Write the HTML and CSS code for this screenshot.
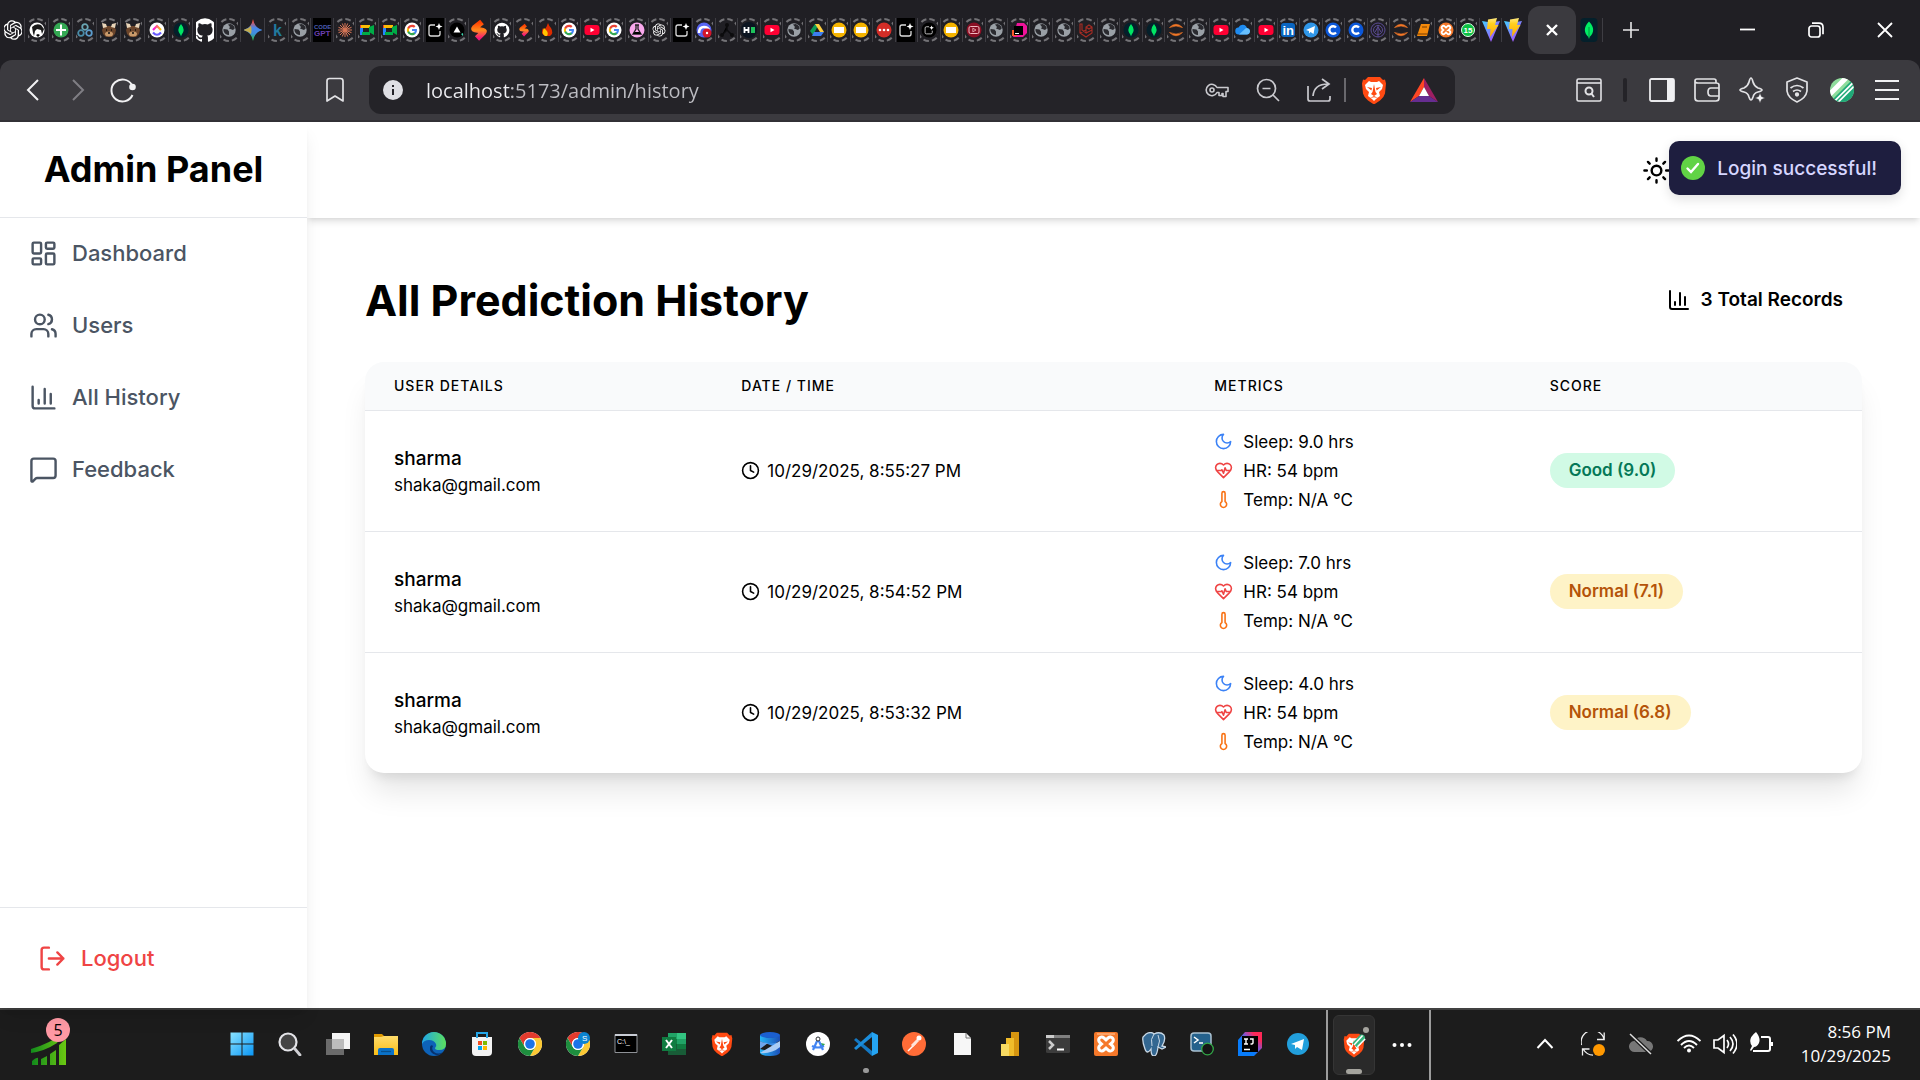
FILE: index.html
```html
<!DOCTYPE html>
<html lang="en">
<head>
<meta charset="utf-8">
<title>Admin Panel - All Prediction History</title>
<link rel="stylesheet" href="styles.css">
</head>
<body>
<svg class="sprite" aria-hidden="true">
  <defs>
    <linearGradient id="gr-gem" x1="0" y1="0" x2="0" y2="1"><stop offset=".1" stop-color="#ee4d40"/><stop offset=".4" stop-color="#4a86e8"/><stop offset=".65" stop-color="#3f8ee0"/><stop offset=".9" stop-color="#2fae5c"/></linearGradient>
    <linearGradient id="gr-fire" x1="0" y1="0" x2="0" y2="1"><stop offset="0" stop-color="#ff3d00"/><stop offset=".5" stop-color="#ff8a1e"/><stop offset="1" stop-color="#f5127c"/></linearGradient>
    <linearGradient id="gr-vite" x1="0" y1="0" x2="1" y2="1"><stop offset="0" stop-color="#41d1ff"/><stop offset="1" stop-color="#bd34fe"/></linearGradient>
    <linearGradient id="gr-bolt" x1="0" y1="0" x2="0" y2="1"><stop offset="0" stop-color="#ffea83"/><stop offset=".3" stop-color="#ffd020"/><stop offset="1" stop-color="#ffa800"/></linearGradient>
    <linearGradient id="gr-win" x1="0" y1="0" x2="1" y2="1"><stop offset="0" stop-color="#8ae3ff"/><stop offset="1" stop-color="#0a96f5"/></linearGradient>
    <linearGradient id="gr-edge" x1="0" y1="0" x2="1" y2="0"><stop offset="0" stop-color="#1fa6e8"/><stop offset="1" stop-color="#5ce05c"/></linearGradient>
    <linearGradient id="gr-folder" x1="0" y1="0" x2="0" y2="1"><stop offset="0" stop-color="#ffdc6b"/><stop offset="1" stop-color="#f9bd17"/></linearGradient>
    <linearGradient id="gr-click" x1="0" y1="0" x2="1" y2="0"><stop offset="0" stop-color="#ff02f0"/><stop offset="1" stop-color="#ffc800"/></linearGradient>
    <linearGradient id="gr-azure" x1="0" y1="0" x2="1" y2="0"><stop offset="0" stop-color="#26b5f5"/><stop offset="1" stop-color="#1b4fb8"/></linearGradient>
    <linearGradient id="gr-ij" x1="0" y1="1" x2="1" y2="0"><stop offset=".4" stop-color="#087cfa"/><stop offset=".6" stop-color="#8a50c8"/><stop offset=".8" stop-color="#fe2857"/></linearGradient>
    <linearGradient id="gr-chart" x1="0" y1="0" x2="1" y2="0"><stop offset="0" stop-color="#128a1c"/><stop offset="1" stop-color="#6bc812"/></linearGradient>

    <circle id="ring" r="11" fill="none" stroke="#737276" stroke-width="2" stroke-dasharray="5.6 3.04"/>
    <path id="p-openai" transform="translate(-12 -12)" fill="#fff" d="M22.28 9.82a5.98 5.98 0 0 0-.52-4.91 6.05 6.05 0 0 0-6.51-2.9A6.07 6.07 0 0 0 4.98 4.18a5.98 5.98 0 0 0-4 2.9 6.05 6.05 0 0 0 .74 7.1 5.98 5.98 0 0 0 .51 4.91 6.05 6.05 0 0 0 6.52 2.9A5.98 5.98 0 0 0 13.26 24a6.06 6.06 0 0 0 5.77-4.21 5.99 5.99 0 0 0 4-2.9 6.06 6.06 0 0 0-.75-7.07zm-9.02 12.61a4.48 4.48 0 0 1-2.88-1.04l.14-.08 4.78-2.76a.8.8 0 0 0 .39-.68v-6.74l2.02 1.17a.07.07 0 0 1 .04.05v5.58a4.5 4.5 0 0 1-4.49 4.5zM3.6 18.3a4.47 4.47 0 0 1-.53-3.01l.14.09 4.78 2.75a.77.77 0 0 0 .78 0l5.84-3.36v2.33a.08.08 0 0 1-.03.06L9.74 19.95A4.5 4.5 0 0 1 3.6 18.3zM2.34 7.9a4.49 4.49 0 0 1 2.37-1.98V11.6a.77.77 0 0 0 .38.68l5.82 3.35-2.02 1.17a.08.08 0 0 1-.07 0l-4.83-2.79A4.5 4.5 0 0 1 2.34 7.87zm16.6 3.85L13.1 8.36l2.02-1.16a.08.08 0 0 1 .07 0l4.83 2.79a4.49 4.49 0 0 1-.68 8.1v-5.67a.79.79 0 0 0-.4-.67zm2-3.02-.14-.09-4.77-2.78a.78.78 0 0 0-.79 0L9.41 9.23V6.9a.07.07 0 0 1 .03-.06l4.83-2.79a4.5 4.5 0 0 1 6.68 4.66zM8.31 12.86l-2.02-1.16a.08.08 0 0 1-.04-.06V6.07a4.5 4.5 0 0 1 7.37-3.45l-.14.08L8.7 5.46a.8.8 0 0 0-.39.68zm1.09-2.36 2.6-1.5 2.61 1.5v3L12.01 15 9.4 13.5z"/>
    <path id="p-github" transform="translate(-12 -12)" fill="#fff" d="M12 .3a12 12 0 0 0-3.8 23.38c.6.12.83-.26.83-.57L9 21.07c-3.34.72-4.04-1.61-4.04-1.61-.55-1.39-1.34-1.76-1.34-1.76-1.08-.74.09-.73.09-.73 1.2.09 1.83 1.24 1.83 1.24 1.08 1.83 2.81 1.3 3.5 1 .1-.78.42-1.31.76-1.61-2.67-.3-5.47-1.33-5.47-5.93 0-1.31.47-2.38 1.24-3.22-.14-.3-.54-1.52.1-3.18 0 0 1-.32 3.3 1.23a11.5 11.5 0 0 1 6 0c2.28-1.55 3.29-1.23 3.29-1.23.64 1.66.24 2.88.12 3.18a4.65 4.65 0 0 1 1.23 3.22c0 4.61-2.8 5.63-5.48 5.92.42.36.81 1.1.81 2.22l-.01 3.29c0 .31.2.69.82.57A12 12 0 0 0 12 .3"/>
    <g id="p-brave">
      <path fill="#ff4a12" d="M-6-13h12l3 3 2-.5 1 4-1 10q-1 4-5 7l-6 4-6-4q-4-3-5-7l-1-10 1-4 2 .5z"/>
      <path fill="#fff" d="M-5-9l2 1h6l2-1 4 4-1 4-3 3 1 4-4 3-2 2-2-2-4-3 1-4-3-3-1-4z"/>
      <path fill="#ff4a12" d="M-7-3l5 1-.6 2.500zM7-3l-5 1 .6 2.500zM0-6l1.500 8L3 4 0 6l-3-2 1.500-2zM-4 8l4-2 4 2-4-.8z"/>
    </g>

    <g id="t-openai"><use href="#p-openai" transform="scale(.82)"/></g>
    <g id="t-openai-s"><use href="#ring"/><use href="#p-openai" transform="scale(.55)"/></g>
    <g id="t-husky"><use href="#ring"/><circle r="7.500" fill="#fff"/><path d="M-5-3q4-4 9-2l3 4-2 5-1-4-4-1-2 2-1 5-1-3z" fill="#1a1a1a"/><path d="M-1 5l2-1 2 1-2 2z"/></g>
    <g id="t-plus"><use href="#ring"/><circle r="7.500" fill="#34a853"/><path d="M0-5.500V5.500M-5 0H5" stroke="#fff" stroke-width="2"/></g>
    <g id="t-rings"><use href="#ring"/><g fill="none" stroke-width="1.800"><circle cy="-3" r="2.800" stroke="#6aa6b4"/><circle cx="-4" cy="3" r="2.800" stroke="#4a8ca8"/><circle cx="4" cy="3" r="2.800" stroke="#5c9ccc"/></g></g>
    <g id="t-deer"><use href="#ring"/><path d="M-5-4h10l2 4-1 4-3 3h-6l-3-3-1-4z" fill="#6b452b"/><path d="M-7-7l4 1 1 3-4 1zM7-7l-4 1-1 3 4 1z" fill="#e8d4b8"/><ellipse cy="4" rx="4" ry="2.500" fill="#c99a6b"/><path d="M-3 0h1M2 0h1M-1 3h2" stroke="#111" stroke-width="1.500"/></g>
    <g id="t-clickup"><use href="#ring"/><circle r="7.500" fill="#fff"/><path d="M-4 0L0-4l4 4" fill="none" stroke="url(#gr-click)" stroke-width="2.200"/><path d="M-4 2.500Q0 7 4 2.500" fill="none" stroke="#6a5cff" stroke-width="2.200"/></g>
    <g id="t-mongo"><use href="#ring"/><circle r="7.500" fill="#04202b"/><path d="M0-6Q5 0 .5 5L0 6.500-.5 5Q-5 0 0-6z" fill="#00e664"/></g>
    <g id="t-mongo-l"><rect x="-8.500" y="-12" width="17" height="24" rx="4" fill="#04202b"/><path d="M0-8.500Q8 0 .6 7L0 9-.6 7Q-8 0 0-8.500z" fill="#00ed64"/><path d="M0-3V8" stroke="#04803a" stroke-width=".8"/></g>
    <g id="t-github"><use href="#p-github"/></g>
    <g id="t-github-s"><use href="#ring"/><use href="#p-github" transform="scale(.62)"/></g>
    <g id="t-globe"><use href="#ring"/><circle r="6.700" fill="#9aa0a6"/><path d="M-5.500-1l4 .5 1.500 2 0 3.500q-4 0-5.500-4zM-1-5.500l2 2.500-1 1.500 4 1.500 1.700-1.500q0-3-4-4.500z" fill="#2a2a2f"/></g>
    <g id="t-gemini"><path d="M0-11Q1.500-2 9.500 0 1.500 2 0 11-1.500 2-9.500 0-1.500-2 0-11z" fill="url(#gr-gem)"/><path d="M-9.500 0Q-4-1.400-2-4-1 0-2 4-4 1.400-9.500 0z" fill="#e5b62a" opacity=".8"/></g>
    <g id="t-kaggle"><use href="#ring"/><text x="-4" y="6" font-size="16" font-weight="700" fill="#20799e">k</text></g>
    <g id="t-gpt"><path d="M-9-12H9V12H-9z" fill="#000"/><text x="-8" y="-1" font-size="6" font-weight="700" fill="#4a5cb0">CODE</text><text x="-8" y="6" font-size="8" font-weight="700" fill="#6a3fb0">GPT</text></g>
    <g id="t-claude"><use href="#ring"/><path d="M0-7V7M-7 0H7M-5-5L5 5M5-5L-5 5M-2.700-6.500L2.700 6.500M2.700-6.500L-2.700 6.500M-6.500-2.700L6.500 2.700M6.500-2.700L-6.500 2.700" stroke="#d97757" stroke-width="1"/></g>
    <g id="t-meet"><use href="#ring"/><path d="M-7-5h4v3h-4z" fill="#ea4335"/><path d="M-6-5h9v3h-9z" fill="#fbbc04"/><path d="M-7-2h3v7h-3z" fill="#2684fc"/><path d="M-5 2h8V5h-8zM2-3l5-2V5L2 2z" fill="#00ac47"/></g>
    <g id="t-google"><use href="#ring"/><circle r="7.500" fill="#fff"/><g transform="scale(.47) translate(-12 -12)"><path d="M22.560 12.250c0-.78-.07-1.530-.2-2.250H12v4.260h5.920c-.26 1.370-1.040 2.530-2.210 3.310v2.770h3.570c2.080-1.920 3.280-4.740 3.280-8.090z" fill="#4285f4"/><path d="M12 23c2.970 0 5.460-.98 7.280-2.660l-3.570-2.770c-.98.66-2.230 1.060-3.710 1.060-2.860 0-5.290-1.930-6.160-4.530H2.180v2.840C3.990 20.530 7.700 23 12 23z" fill="#34a853"/><path d="M5.840 14.090a6.500 6.500 0 0 1 0-4.180V7.070H2.180a11 11 0 0 0 0 9.860z" fill="#fbbc05"/><path d="M12 5.380c1.620 0 3.060.56 4.210 1.640l3.150-3.150C17.450 2.090 14.970 1 12 1 7.700 1 3.990 3.470 2.180 7.070l3.660 2.840c.87-2.600 3.300-4.530 6.160-4.530z" fill="#ea4335"/></g></g>
    <g id="p-spark"><path d="M0-5H-4Q-6-5-6-3V4Q-6 6-4 6H3Q5 6 5 4V1" fill="none" stroke="#ddd" stroke-width="1.300"/><path d="M4-7l1 2.500L7.500-3.500 5-2.500 4 0 3-2.500.5-3.500 3-4.500z" fill="#fff"/></g>
    <g id="t-spark"><path d="M-9-12H9V12H-9z" fill="#000"/><use href="#p-spark"/></g>
    <g id="t-spark-s"><use href="#ring"/><circle r="7.500" fill="#000"/><use href="#p-spark" transform="scale(.65)"/></g>
    <g id="t-tri"><use href="#ring"/><circle r="7.500" fill="#000"/><path d="M0-3.500L3.500 2.500h-7z" fill="#fff"/><path d="M4 4l2-1v3z" fill="#3ddbb0"/></g>
    <path id="p-flame" d="M3-8L-4.500-2q-1 1 .5 1.200L4 .8q1.500.4.500 1.400L-2 8.500" fill="none" stroke="url(#gr-fire)" stroke-width="6"/>
    <g id="t-flame"><use href="#p-flame"/></g>
    <g id="t-flame-s"><use href="#ring"/><use href="#p-flame" transform="scale(.6)"/></g>
    <g id="t-fire"><use href="#ring"/><path d="M1-7q1 3 3 5 3 5-1 8h-5q-5-3-2-8l1 2q3-3 4-7z" fill="#dd2c00"/><path d="M-3-2q-3 5 1 8h2q2-3-1-6z" fill="#ffc400"/></g>
    <g id="t-yt"><use href="#ring"/><rect x="-7.500" y="-5" width="15" height="10" rx="3" fill="#ff0033"/><path d="M-1.500-2.200L2.500 0l-4 2.200z" fill="#fff"/></g>
    <g id="t-flask"><use href="#ring"/><circle r="7.500" fill="#f9a8ec"/><path d="M-2-5H2M-1-5V-1L-4 4H4L1-1V-5" fill="none" stroke="#222" stroke-width="1.300"/><path d="M-2.500 2h5l1.500 2h-8z"/></g>
    <g id="t-discord"><use href="#ring"/><circle r="7.500" fill="#5865f2"/><path d="M-5 3q0-6 5-6 4 0 5 3" fill="none" stroke="#fff" stroke-width="2.500"/><circle cx="3" cy="3" r="4.500" fill="#d3162b"/><circle cx="3" cy="3" r="1.200" fill="#fff"/></g>
    <g id="t-nodes"><use href="#ring"/><path d="M0-5V0L-5 5M0 0l5 5" stroke="#0c0c0e" stroke-width="1.500"/><g fill="#0c0c0e"><circle cy="-5" r="2"/><circle cx="-5" cy="5" r="2"/><circle cx="5" cy="5" r="2"/></g></g>
    <g id="t-hack"><use href="#ring"/><circle r="8" fill="#0b1420"/><path d="M-4.500-3V3M-.500-3V3M-4.500 0H-.5" stroke="#fff" stroke-width="1.800"/><path d="M2-3h4v6H2z" fill="#1ec35a"/></g>
    <g id="t-drive"><use href="#ring"/><path d="M-2-6h4L-4 5-7 1z" fill="#0f9d58"/><path d="M-2-6h4L7 2H3z" fill="#ffcf3f"/><path d="M-3 2H7L4 6h-9z" fill="#3d7df0"/></g>
    <g id="t-slides"><use href="#ring"/><circle r="7.500" fill="#f5b400"/><path d="M-5-3H5V3H-5z" fill="#fff"/></g>
    <g id="t-dots"><use href="#ring"/><circle r="7.500" fill="#d32d27"/><g fill="#fff"><circle cx="-4" r="1.300"/><circle r="1.300"/><circle cx="4" r="1.300"/></g></g>
    <g id="t-play"><use href="#ring"/><circle r="7.500" fill="#8a0f24"/><rect x="-5" y="-3.500" width="10" height="7" rx="1.500" fill="none" stroke="#f2b9c0"/><path d="M-1.200-1.800L2 0l-3.200 1.800z" fill="none" stroke="#f2b9c0" stroke-width=".8"/></g>
    <g id="t-jb"><use href="#ring"/><path d="M-2-7h7l3 3v7l-4 4h-10z" fill="#f0139b"/><path d="M-7 0h5v6h-5z" fill="#fc5a2a"/><path d="M-5-4h9v9h-9z"/><path d="M-4 3.500h4" stroke="#fff"/></g>
    <g id="t-laravel"><use href="#ring"/><path d="M-6-6V3L0 7l6-4V-3L3-5 0-3V3l-4-3v-6zM0-3l3 2 3-2M0 3l6-3M-6 3l6-3" fill="none" stroke="#a82c24" stroke-width="1.100"/></g>
    <g id="t-jupyter"><use href="#ring"/><path d="M-6.500-2.500Q0-9 6.500-2.500 0-5.500-6.500-2.500zM-6.500 2.500Q0 9 6.500 2.500 0 5.500-6.500 2.500z" fill="#f37726" stroke="#f37726" stroke-width=".6"/></g>
    <g id="t-cloud"><use href="#ring"/><path d="M-4 4.500a3.500 3.500 0 0 1-.5-7A4.500 4.500 0 0 1 4-2a3.300 3.300 0 0 1 0 6.500z" fill="#1e8bf0"/><path d="M-4 4.500L3-2q4 0 4 3.500-.5 3-3 3z" fill="#67c0ff"/></g>
    <g id="t-in"><use href="#ring"/><rect x="-7" y="-7" width="14" height="14" rx="3" fill="#0a66c2"/><text x="-5.500" y="4.500" font-size="13" font-weight="700" fill="#fff">in</text></g>
    <g id="t-tg"><use href="#ring"/><circle r="7.500" fill="#2f96e8"/><path d="M-5 0L4-4 2.500 4-.5 2-2 3.500V1z" fill="#fff"/></g>
    <g id="t-c"><use href="#ring"/><circle r="7.500" fill="#0b57d8"/><path d="M3-2.500A3.800 3.800 0 1 0 3 2.500" fill="none" stroke="#fff" stroke-width="2.400"/></g>
    <g id="t-purple"><use href="#ring"/><g fill="none" stroke="#5a4b94"><circle r="7"/><circle r="4.500"/><path d="M0-5V7M-3 2l3-5 3 5"/></g></g>
    <g id="t-book"><use href="#ring"/><path d="M-2-6H7L4 6H-6z" fill="#f58a0b"/><path d="M-1-3H4M-5 4H4.500" stroke="#7a3d00" stroke-width="1.200"/></g>
    <g id="p-x" stroke-linecap="round"><path d="M-2.500-2.300L2.500 2.300M2.500-2.300L-2.500 2.300" stroke="#fff" stroke-width="5.400"/><path d="M-2.500-2.300L2.500 2.300M2.500-2.300L-2.500 2.300" stroke="#f5782a" stroke-width="1.800"/></g>
    <g id="t-xampp"><use href="#ring"/><circle r="7.500" fill="#f5782a"/><use href="#p-x"/></g>
    <g id="t-wa"><use href="#ring"/><circle r="6.500" fill="#0cc143" stroke="#dfffe8"/><text x="-4.500" y="3" font-size="8" font-weight="700" fill="#fff">15</text></g>
    <g id="t-vite"><path d="M-9-9L0-7.500 9-9 0 12z" fill="url(#gr-vite)"/><path d="M-3-10.500L6-12 4-5H7.500L-1 7-.5-1H-4z" fill="url(#gr-bolt)"/></g>

    <g id="l-chart" fill="none" stroke="currentColor" stroke-width="2" stroke-linecap="round" stroke-linejoin="round"><path d="M3 3v16a2 2 0 0 0 2 2h16M18 17V9M13 17V5M8 17v-3"/></g>
    <g id="l-clock" fill="none" stroke="currentColor" stroke-width="2" stroke-linecap="round" stroke-linejoin="round"><circle cx="12" cy="12" r="10"/><path d="M12 6v6l4 2"/></g>
    <path id="l-moon" fill="none" stroke="currentColor" stroke-width="2" stroke-linecap="round" stroke-linejoin="round" d="M12 3a6 6 0 0 0 9 9 9 9 0 1 1-9-9Z"/>
    <g id="l-heart" fill="none" stroke="currentColor" stroke-width="2" stroke-linecap="round" stroke-linejoin="round"><path d="M19 14c1.490-1.460 3-3.210 3-5.500A5.500 5.500 0 0 0 16.500 3c-1.760 0-3 .5-4.500 2-1.500-1.500-2.740-2-4.500-2A5.500 5.500 0 0 0 2 8.500c0 2.300 1.500 4.050 3 5.500l7 7Z"/><path d="M3.220 12H9.500l.5-1 2 4.500 2-7 1.500 3.500h5.270"/></g>
    <path id="l-temp" fill="none" stroke="currentColor" stroke-width="2" stroke-linecap="round" stroke-linejoin="round" d="M14 4v10.540a4 4 0 1 1-4 0V4a2 2 0 0 1 4 0Z"/>
    <g id="k-chrome"><circle r="12" fill="#fff"/><path d="M-10.400-6A12 12 0 0 1 10.400-6H0A6 6 0 0 0-5.200 3z" fill="#e33b2e"/><path d="M10.400-6A12 12 0 0 1 0 12L5.200 3A6 6 0 0 0 0-6z" fill="#fcc934"/><path d="M0 12A12 12 0 0 1-10.400-6L-5.200 3A6 6 0 0 0 5.200 3z" fill="#1e8e3e"/><circle r="6" fill="#fff"/><circle r="4.800" fill="#1a73e8"/></g>
  </defs>
</svg>

<header class="browser">
  <div class="tabstrip">
    <div class="pinned">
      <button class="tab" aria-label="ChatGPT"><svg viewBox="-9 -12 18 24"><use href="#t-openai"/></svg></button>
      <button class="tab" aria-label="Tab"><svg viewBox="-9 -12 18 24"><use href="#t-husky"/></svg></button>
      <button class="tab" aria-label="Tab"><svg viewBox="-9 -12 18 24"><use href="#t-plus"/></svg></button>
      <button class="tab" aria-label="Tab"><svg viewBox="-9 -12 18 24"><use href="#t-rings"/></svg></button>
      <button class="tab" aria-label="Tab"><svg viewBox="-9 -12 18 24"><use href="#t-deer"/></svg></button>
      <button class="tab" aria-label="Tab"><svg viewBox="-9 -12 18 24"><use href="#t-deer"/></svg></button>
      <button class="tab" aria-label="ClickUp"><svg viewBox="-9 -12 18 24"><use href="#t-clickup"/></svg></button>
      <button class="tab" aria-label="MongoDB"><svg viewBox="-9 -12 18 24"><use href="#t-mongo"/></svg></button>
      <button class="tab" aria-label="GitHub"><svg viewBox="-9 -12 18 24"><use href="#t-github"/></svg></button>
      <button class="tab" aria-label="Tab"><svg viewBox="-9 -12 18 24"><use href="#t-globe"/></svg></button>
      <button class="tab" aria-label="Gemini"><svg viewBox="-9 -12 18 24"><use href="#t-gemini"/></svg></button>
      <button class="tab" aria-label="Kaggle"><svg viewBox="-9 -12 18 24"><use href="#t-kaggle"/></svg></button>
    </div>
    <div class="tabs">
      <button class="tab" aria-label="Tab"><svg viewBox="-9 -12 18 24"><use href="#t-globe"/></svg></button>
      <button class="tab" aria-label="CodeGPT"><svg viewBox="-9 -12 18 24"><use href="#t-gpt"/></svg></button>
      <button class="tab" aria-label="Claude"><svg viewBox="-9 -12 18 24"><use href="#t-claude"/></svg></button>
      <button class="tab" aria-label="Meet"><svg viewBox="-9 -12 18 24"><use href="#t-meet"/></svg></button>
      <button class="tab" aria-label="Meet"><svg viewBox="-9 -12 18 24"><use href="#t-meet"/></svg></button>
      <button class="tab" aria-label="Google"><svg viewBox="-9 -12 18 24"><use href="#t-google"/></svg></button>
      <button class="tab" aria-label="Tab"><svg viewBox="-9 -12 18 24"><use href="#t-spark"/></svg></button>
      <button class="tab" aria-label="Tab"><svg viewBox="-9 -12 18 24"><use href="#t-tri"/></svg></button>
      <button class="tab" aria-label="Tab"><svg viewBox="-9 -12 18 24"><use href="#t-flame"/></svg></button>
      <button class="tab" aria-label="GitHub"><svg viewBox="-9 -12 18 24"><use href="#t-github-s"/></svg></button>
      <button class="tab" aria-label="Tab"><svg viewBox="-9 -12 18 24"><use href="#t-flame-s"/></svg></button>
      <button class="tab" aria-label="Firebase"><svg viewBox="-9 -12 18 24"><use href="#t-fire"/></svg></button>
      <button class="tab" aria-label="Google"><svg viewBox="-9 -12 18 24"><use href="#t-google"/></svg></button>
      <button class="tab" aria-label="YouTube"><svg viewBox="-9 -12 18 24"><use href="#t-yt"/></svg></button>
      <button class="tab" aria-label="Google"><svg viewBox="-9 -12 18 24"><use href="#t-google"/></svg></button>
      <button class="tab" aria-label="Tab"><svg viewBox="-9 -12 18 24"><use href="#t-flask"/></svg></button>
      <button class="tab" aria-label="ChatGPT"><svg viewBox="-9 -12 18 24"><use href="#t-openai-s"/></svg></button>
      <button class="tab" aria-label="Tab"><svg viewBox="-9 -12 18 24"><use href="#t-spark"/></svg></button>
      <button class="tab" aria-label="Discord"><svg viewBox="-9 -12 18 24"><use href="#t-discord"/></svg></button>
      <button class="tab" aria-label="Tab"><svg viewBox="-9 -12 18 24"><use href="#t-nodes"/></svg></button>
      <button class="tab" aria-label="HackerRank"><svg viewBox="-9 -12 18 24"><use href="#t-hack"/></svg></button>
      <button class="tab" aria-label="YouTube"><svg viewBox="-9 -12 18 24"><use href="#t-yt"/></svg></button>
      <button class="tab" aria-label="Tab"><svg viewBox="-9 -12 18 24"><use href="#t-globe"/></svg></button>
      <button class="tab" aria-label="Drive"><svg viewBox="-9 -12 18 24"><use href="#t-drive"/></svg></button>
      <button class="tab" aria-label="Slides"><svg viewBox="-9 -12 18 24"><use href="#t-slides"/></svg></button>
      <button class="tab" aria-label="Slides"><svg viewBox="-9 -12 18 24"><use href="#t-slides"/></svg></button>
      <button class="tab" aria-label="Tab"><svg viewBox="-9 -12 18 24"><use href="#t-dots"/></svg></button>
      <button class="tab" aria-label="Tab"><svg viewBox="-9 -12 18 24"><use href="#t-spark"/></svg></button>
      <button class="tab" aria-label="Tab"><svg viewBox="-9 -12 18 24"><use href="#t-spark-s"/></svg></button>
      <button class="tab" aria-label="Slides"><svg viewBox="-9 -12 18 24"><use href="#t-slides"/></svg></button>
      <button class="tab" aria-label="Tab"><svg viewBox="-9 -12 18 24"><use href="#t-play"/></svg></button>
      <button class="tab" aria-label="Tab"><svg viewBox="-9 -12 18 24"><use href="#t-globe"/></svg></button>
      <button class="tab" aria-label="JetBrains"><svg viewBox="-9 -12 18 24"><use href="#t-jb"/></svg></button>
      <button class="tab" aria-label="Tab"><svg viewBox="-9 -12 18 24"><use href="#t-globe"/></svg></button>
      <button class="tab" aria-label="Tab"><svg viewBox="-9 -12 18 24"><use href="#t-globe"/></svg></button>
      <button class="tab" aria-label="Laravel"><svg viewBox="-9 -12 18 24"><use href="#t-laravel"/></svg></button>
      <button class="tab" aria-label="Tab"><svg viewBox="-9 -12 18 24"><use href="#t-globe"/></svg></button>
      <button class="tab" aria-label="MongoDB"><svg viewBox="-9 -12 18 24"><use href="#t-mongo"/></svg></button>
      <button class="tab" aria-label="MongoDB"><svg viewBox="-9 -12 18 24"><use href="#t-mongo"/></svg></button>
      <button class="tab" aria-label="Jupyter"><svg viewBox="-9 -12 18 24"><use href="#t-jupyter"/></svg></button>
      <button class="tab" aria-label="Tab"><svg viewBox="-9 -12 18 24"><use href="#t-globe"/></svg></button>
      <button class="tab" aria-label="YouTube"><svg viewBox="-9 -12 18 24"><use href="#t-yt"/></svg></button>
      <button class="tab" aria-label="OneDrive"><svg viewBox="-9 -12 18 24"><use href="#t-cloud"/></svg></button>
      <button class="tab" aria-label="YouTube"><svg viewBox="-9 -12 18 24"><use href="#t-yt"/></svg></button>
      <button class="tab" aria-label="LinkedIn"><svg viewBox="-9 -12 18 24"><use href="#t-in"/></svg></button>
      <button class="tab" aria-label="Telegram"><svg viewBox="-9 -12 18 24"><use href="#t-tg"/></svg></button>
      <button class="tab" aria-label="Coursera"><svg viewBox="-9 -12 18 24"><use href="#t-c"/></svg></button>
      <button class="tab" aria-label="Coursera"><svg viewBox="-9 -12 18 24"><use href="#t-c"/></svg></button>
      <button class="tab" aria-label="Tab"><svg viewBox="-9 -12 18 24"><use href="#t-purple"/></svg></button>
      <button class="tab" aria-label="Jupyter"><svg viewBox="-9 -12 18 24"><use href="#t-jupyter"/></svg></button>
      <button class="tab" aria-label="Notebook"><svg viewBox="-9 -12 18 24"><use href="#t-book"/></svg></button>
      <button class="tab" aria-label="XAMPP"><svg viewBox="-9 -12 18 24"><use href="#t-xampp"/></svg></button>
      <button class="tab" aria-label="WhatsApp"><svg viewBox="-9 -12 18 24"><use href="#t-wa"/></svg></button>
      <button class="tab" aria-label="Vite"><svg viewBox="-9 -12 18 24"><use href="#t-vite"/></svg></button>
      <button class="tab tab-last" aria-label="Vite"><svg viewBox="-9 -12 18 24"><use href="#t-vite"/></svg></button>
    </div>
    <button class="tab-active" aria-label="Close tab"><svg width="14" height="14" viewBox="0 0 14 14"><path d="M2 2l10 10M12 2L2 12" stroke="#fff" stroke-width="2.400"/></svg></button>
    <button class="tab tab-after" aria-label="MongoDB"><svg viewBox="-9 -12 18 24"><use href="#t-mongo-l"/></svg></button>
    <button class="new-tab" aria-label="New tab"><svg width="16" height="16" viewBox="0 0 16 16"><path d="M8 0v16M0 8h16" stroke="#e6e6e8" stroke-width="1.600"/></svg></button>
    <div class="window-controls">
      <button aria-label="Minimize"><svg width="16" height="16" viewBox="0 0 16 16"><path d="M1 7.500h15" stroke="#fff" stroke-width="1.800"/></svg></button>
      <button aria-label="Restore"><svg width="16" height="16" viewBox="0 0 16 16" fill="none" stroke="#fff" stroke-width="1.700"><rect x="1" y="4" width="11" height="11" rx="2.500"/><path d="M4 1.200h7q4 0 4 4v7"/></svg></button>
      <button aria-label="Close"><svg width="16" height="16" viewBox="0 0 16 16"><path d="M1 1l14 14M15 1L1 15" stroke="#fff" stroke-width="1.800"/></svg></button>
    </div>
  </div>

  <div class="toolbar">
    <div class="nav-buttons">
      <button aria-label="Back"><svg width="28" height="28" viewBox="0 0 28 28"><path d="M19 4L9 14l10 10" fill="none" stroke="#f1f1f3" stroke-width="2"/></svg></button>
      <button aria-label="Forward"><svg width="28" height="28" viewBox="0 0 28 28"><path d="M9 4l10 10L9 24" fill="none" stroke="#7f7e84" stroke-width="2"/></svg></button>
      <button aria-label="Reload"><svg width="28" height="28" viewBox="0 0 28 28"><path d="M23 9A11 11 0 1 0 23.500 19" fill="none" stroke="#f1f1f3" stroke-width="2"/><circle cx="23.500" cy="11" r="3.300" fill="#f1f1f3"/></svg></button>
    </div>
    <button class="bookmark" aria-label="Bookmark"><svg width="20" height="26" viewBox="0 0 20 26"><path d="M2 4q0-2.500 2.500-2.500h11Q18 1.500 18 4v20l-8-5-8 5z" fill="none" stroke="#e2e2e5" stroke-width="1.700" stroke-linejoin="round"/></svg></button>
    <div class="address">
      <svg class="site-info" width="20" height="20" viewBox="0 0 20 20"><circle cx="10" cy="10" r="10" fill="#dfdfe4"/><path d="M10 9v6M10 5v2" stroke="#242328" stroke-width="2"/></svg>
      <input class="url" type="text" value="localhost:5173/admin/history" aria-label="Address">
      <div class="address-actions">
        <button aria-label="Passwords"><svg width="24" height="24" viewBox="0 0 24 24" fill="none" stroke="#c9c9ce" stroke-width="1.600"><path d="M12 9.500h11v4h-2v5h-3v-3h-1v2h-3v-3h-2a5.700 5.700 0 1 1 0-5z" stroke-linejoin="round"/><circle cx="7" cy="12" r="2"/></svg></button>
        <button aria-label="Zoom"><svg width="24" height="24" viewBox="0 0 24 24" fill="none" stroke="#c9c9ce" stroke-width="1.700"><circle cx="10.500" cy="10.500" r="9"/><path d="M17 17l6 6M6.500 10.500h8"/></svg></button>
        <button aria-label="Share"><svg width="24" height="24" viewBox="0 0 24 24" fill="none" stroke="#c9c9ce" stroke-width="1.700"><path d="M1 8v13q0 2 2 2h18q2 0 2-2v-3M6 18Q7 6 21 6M15 1l7 5-7 5"/></svg></button>
      </div>
      <div class="address-brand">
        <button aria-label="Brave Shields"><svg width="24" height="28" viewBox="-12 -14 24 28"><use href="#p-brave"/></svg></button>
        <button aria-label="Rewards"><svg width="28" height="24" viewBox="0 0 28 24"><path d="M14 0L0 24l9-6 5-9z" fill="#ff4724"/><path d="M14 0l14 24-9-6-5-9z" fill="#9e1f63"/><path d="M0 24h28l-9-6H9z" fill="#662d91"/><path d="M14 9l5 9H9z" fill="#fff"/></svg></button>
      </div>
    </div>
    <div class="extensions">
      <button aria-label="Find"><svg width="26" height="24" viewBox="0 0 26 24" fill="none" stroke="#e2e2e5" stroke-width="1.600"><rect x="1" y="1" width="24" height="22" rx="1.500"/><path d="M1 5h24"/><circle cx="13" cy="13" r="3.500" stroke-width="2"/><path d="M15 15l3 4" stroke-width="2"/></svg></button>
      <span class="ext-sep"></span>
      <button aria-label="Sidebar"><svg width="26" height="24" viewBox="0 0 26 24"><rect x="1" y="1" width="24" height="22" rx="1.500" fill="none" stroke="#e9e9ec" stroke-width="1.800"/><path d="M18 1h7v22h-7z" fill="#f0f0f3"/></svg></button>
      <button aria-label="Wallet"><svg width="26" height="24" viewBox="0 0 26 24" fill="none" stroke="#e2e2e5" stroke-width="1.700"><path d="M22 5V3q0-2-2-2H3Q1 1 1 3v17q0 3 3 3h18q3 0 3-3V7q0-2-3-2H4Q1 5 1 3M25 10h-8q-3 0-3 4t3 4h8"/></svg></button>
      <button aria-label="Leo AI"><svg width="26" height="26" viewBox="0 0 26 26"><path d="M12 1q1 0 2 4 1 4 5 6 4 1 4 2t-4 2q-4 1-5 5-1 3-2 3t-2-3q-1-4-5-5-4-1-4-2t4-2q4-2 5-6 1-4 2-4z" fill="none" stroke="#e2e2e5" stroke-width="1.700"/><path d="M21 16l1.500 3.500L26 21l-3.500 1.500L21 26l-1.500-3.500L16 21l3.500-1.500z" fill="#f4f4f6" stroke="#3b3a3f" stroke-width=".5"/></svg></button>
      <button aria-label="VPN"><svg width="24" height="26" viewBox="0 0 24 26" fill="none" stroke="#e2e2e5" stroke-width="1.700"><path d="M12 1l10 4v9q-1 7-10 11Q3 21 2 14V5z" stroke-linejoin="round"/><path d="M5.500 11q6.500-5 13 0M8 14.500q4-3 8 0"/><circle cx="12" cy="17.500" r="1.300" fill="#e2e2e5"/></svg></button>
      <button aria-label="Profile"><svg width="24" height="24" viewBox="0 0 24 24"><clipPath id="round"><circle cx="12" cy="12" r="12"/></clipPath><g clip-path="url(#round)"><path d="M0 0h24v24H0z" fill="#8fdc9c"/><path d="M0 24L24 0v24z" fill="#1fa978"/><path d="M-2 18L17-1M4 26L26 4" stroke="#fff" stroke-width="5"/><path d="M5 25L26 4" stroke="#1fa978" stroke-width="1.500"/></g></svg></button>
      <button aria-label="Menu"><svg width="26" height="22" viewBox="0 0 26 22"><path d="M1 2h24M1 11h24M1 20h24" stroke="#f1f1f3" stroke-width="2"/></svg></button>
    </div>
  </div>
</header>

<div class="app">
  <aside class="sidebar">
    <h2 class="brand">Admin Panel</h2>
    <nav class="menu">
      <a href="#dashboard"><svg viewBox="0 0 24 24"><rect x="3" y="3" width="7" height="9" rx="1"/><rect x="14" y="3" width="7" height="5" rx="1"/><rect x="14" y="12" width="7" height="9" rx="1"/><rect x="3" y="16" width="7" height="5" rx="1"/></svg>Dashboard</a>
      <a href="#users"><svg viewBox="0 0 24 24"><path d="M16 21v-2a4 4 0 0 0-4-4H6a4 4 0 0 0-4 4v2M16 3.130a4 4 0 0 1 0 7.740M22 21v-2a4 4 0 0 0-3-3.870"/><circle cx="9" cy="7" r="4"/></svg>Users</a>
      <a href="#history"><svg viewBox="0 0 24 24"><use href="#l-chart"/></svg>All History</a>
      <a href="#feedback"><svg viewBox="0 0 24 24"><path d="M22 17a2 2 0 0 1-2 2H6.830a2 2 0 0 0-1.420.59l-2.200 2.200A.7.7 0 0 1 2 21.290V5a2 2 0 0 1 2-2h16a2 2 0 0 1 2 2z"/></svg>Feedback</a>
    </nav>
    <div class="sidebar-foot">
      <button class="logout"><svg viewBox="0 0 24 24"><path d="m16 17 5-5-5-5M21 12H9M9 21H5a2 2 0 0 1-2-2V5a2 2 0 0 1 2-2h4"/></svg>Logout</button>
    </div>
  </aside>

  <div class="content">
    <div class="topbar">
      <button class="theme" aria-label="Toggle theme"><svg viewBox="0 0 24 24"><circle cx="12" cy="12" r="4"/><path d="M12 2v2M12 20v2M4.930 4.930l1.410 1.410M17.660 17.660l1.410 1.410M2 12h2M20 12h2M6.340 17.660l-1.410 1.410M19.070 4.930l-1.410 1.410"/></svg></button>
    </div>
    <main class="page">
      <div class="page-head">
        <h1>All Prediction History</h1>
        <p class="total"><svg viewBox="0 0 24 24"><use href="#l-chart"/></svg>3 Total Records</p>
      </div>
      <div class="card">
        <table>
          <colgroup><col class="c-user"><col class="c-date"><col class="c-metrics"><col></colgroup>
          <thead><tr><th>USER DETAILS</th><th>DATE / TIME</th><th>METRICS</th><th>SCORE</th></tr></thead>
          <tbody>
            <tr>
              <td><div class="name">sharma</div><div class="mail">shaka@gmail.com</div></td>
              <td><div class="date"><svg viewBox="0 0 24 24"><use href="#l-clock"/></svg>10/29/2025, 8:55:27 PM</div></td>
              <td><ul class="metrics">
                <li><svg class="sleep" viewBox="0 0 24 24"><use href="#l-moon"/></svg>Sleep: 9.0 hrs</li>
                <li><svg class="heart" viewBox="0 0 24 24"><use href="#l-heart"/></svg>HR: 54 bpm</li>
                <li><svg class="temp" viewBox="0 0 24 24"><use href="#l-temp"/></svg>Temp: N/A °C</li>
              </ul></td>
              <td><span class="badge good">Good (9.0)</span></td>
            </tr>
            <tr>
              <td><div class="name">sharma</div><div class="mail">shaka@gmail.com</div></td>
              <td><div class="date"><svg viewBox="0 0 24 24"><use href="#l-clock"/></svg>10/29/2025, 8:54:52 PM</div></td>
              <td><ul class="metrics">
                <li><svg class="sleep" viewBox="0 0 24 24"><use href="#l-moon"/></svg>Sleep: 7.0 hrs</li>
                <li><svg class="heart" viewBox="0 0 24 24"><use href="#l-heart"/></svg>HR: 54 bpm</li>
                <li><svg class="temp" viewBox="0 0 24 24"><use href="#l-temp"/></svg>Temp: N/A °C</li>
              </ul></td>
              <td><span class="badge normal">Normal (7.1)</span></td>
            </tr>
            <tr>
              <td><div class="name">sharma</div><div class="mail">shaka@gmail.com</div></td>
              <td><div class="date"><svg viewBox="0 0 24 24"><use href="#l-clock"/></svg>10/29/2025, 8:53:32 PM</div></td>
              <td><ul class="metrics">
                <li><svg class="sleep" viewBox="0 0 24 24"><use href="#l-moon"/></svg>Sleep: 4.0 hrs</li>
                <li><svg class="heart" viewBox="0 0 24 24"><use href="#l-heart"/></svg>HR: 54 bpm</li>
                <li><svg class="temp" viewBox="0 0 24 24"><use href="#l-temp"/></svg>Temp: N/A °C</li>
              </ul></td>
              <td><span class="badge normal">Normal (6.8)</span></td>
            </tr>
          </tbody>
        </table>
      </div>
    </main>
  </div>
  <div class="toast" role="status"><svg width="24" height="24" viewBox="0 0 24 24"><circle cx="12" cy="12" r="12" fill="#61d345"/><path d="M6.500 12.500l3.500 3.500 7-8" fill="none" stroke="#fff" stroke-width="2.400" stroke-linecap="round"/></svg>Login successful!</div>
</div>

<footer class="taskbar">
  <button class="widget" aria-label="Widgets"><svg width="36" height="32" viewBox="0 0 36 32"><g fill="url(#gr-chart)"><path d="M0 16Q20 10 32 0L26 10Q14 18 0 20z"/><path d="M1 28q5-4 6-3v7H1zM10 26l6-3v9h-6zM19 21l6-4v15h-6zM28 12l7-6v26h-7z"/></g></svg><span class="count">5</span></button>
  <div class="apps">
    <button aria-label="Start"><svg viewBox="-12 -12 24 24"><path d="M-11.500-11.500h11v11h-11zM.500-11.500h11v11h-11zM-11.500.500h11v11h-11zM.500.500h11v11h-11z" fill="url(#gr-win)"/></svg></button>
    <button aria-label="Search"><svg viewBox="-12 -12 24 24"><circle cx="-2" cy="-2" r="8.500" fill="#444" stroke="#e4e4e8" stroke-width="2.200"/><path d="M5 5l5 6" stroke="#d0d0d4" stroke-width="2.800" stroke-linecap="round"/></svg></button>
    <button aria-label="Task View"><svg viewBox="-12 -12 24 24"><path d="M-12-5H6v16h-18z" fill="#6b6b6b"/><path d="M-6-11h18V5H-6z" fill="#f4f4f4"/><path d="M-6-5H6V5H-6z" fill="#bcbcbc"/></svg></button>
    <button aria-label="File Explorer"><svg viewBox="-12 -12 24 24"><path d="M-12-10h8l3 3v6h-11z" fill="#e09a00"/><path d="M-12-7h7l3-1h14v19h-24z" fill="url(#gr-folder)"/><path d="M-8 11V6q0-2 2-2H6q2 0 2 2v5z" fill="#0a72c9"/><path d="M-5 7.500H5" stroke="#074f8c" stroke-width="1.300"/></svg></button>
    <button aria-label="Edge"><svg viewBox="-12 -12 24 24"><circle r="12" fill="#0d62b8"/><path d="M-12 0A12 12 0 0 1 12 0q0 6-7 6-4 0-4-2 2-2 1-4-2-4-7-4-5 0-7 4z" fill="url(#gr-edge)"/><path d="M-4 3q-1 6 6 8 4 1 7-3-5 3-9 0-3-3-1-6-2-2-3 1z" fill="#08326e"/></svg></button>
    <button aria-label="Store"><svg viewBox="-12 -12 24 24"><path d="M-10-7h20V8q0 4-4 4H-6q-4 0-4-4z" fill="#f3f3f3"/><path d="M-5-6v-5H5v5" fill="none" stroke="#24a6e8" stroke-width="2"/><path d="M-4-3h4v4h-4z" fill="#f25022"/><path d="M1-3h4v4H1z" fill="#7fba00"/><path d="M-4 2h4v4h-4z" fill="#00a4ef"/><path d="M1 2h4v4H1z" fill="#ffb900"/></svg></button>
    <button aria-label="Chrome"><svg viewBox="-12 -12 24 24"><use href="#k-chrome"/></svg></button>
    <button aria-label="Chrome profile"><svg viewBox="-12 -12 24 24"><use href="#k-chrome"/><circle cx="6" cy="-6" r="6" fill="#0b84d0"/><text x="4" y="-3" font-size="8" fill="#fff">S</text></svg></button>
    <button aria-label="Command Prompt"><svg viewBox="-12 -12 24 24"><path d="M-11-9.500h22v18h-22z" stroke="#8e9196"/><path d="M-11-9h22" stroke="#c8ccd4" stroke-width="2"/><text x="-9" y="0" font-size="7" fill="#fff">C:\_</text></svg></button>
    <button aria-label="Excel"><svg viewBox="-12 -12 24 24"><path d="M-6-11H3V0h-9z" fill="#21a366"/><path d="M3-11h9v11H3z" fill="#33c481"/><path d="M-6-5H3V0h-9z" fill="#107c41"/><path d="M3-5h9V0H3z" fill="#21a366"/><path d="M-6 0H12V11H-6z" fill="#185c37"/><path d="M3 0h9v5H3z" fill="#107c41"/><path d="M-12-7H2V7h-14z" fill="#107c41"/><path d="M-8-4l6 8M-2-4l-6 8" stroke="#fff" stroke-width="2"/></svg></button>
    <button aria-label="Brave"><svg viewBox="-14 -14 28 28"><use href="#p-brave"/></svg></button>
    <button aria-label="Data Studio"><svg viewBox="-12 -12 24 24"><path d="M-10-9v6l20 8v-5z" fill="#3d8de6"/><path d="M-10-9q10 5 20 0v6q-10 5-20 0z" fill="url(#gr-azure)"/><ellipse cy="-9" rx="10" ry="3" fill="#1b5fd0"/><path d="M-10 9V5q8 3 20-2v6q-2 3-10 3t-10-3z" fill="url(#gr-azure)"/><path d="M-10 9L10-3v6q-8 7-20 6z" fill="#a9ccf5"/><path d="M-10-3q4 2 8 2l-8 6z" fill="#6fa6ea"/></svg></button>
    <button aria-label="Android Studio"><svg viewBox="-12 -12 24 24"><circle r="12" fill="#fff"/><path d="M3-1l4 1-3 4z" fill="#34a853"/><path d="M-5 6L0-5 5 6M-6 2q6 3 12 0" fill="none" stroke="#4285f4" stroke-width="2.200"/><circle cy="-5" r="2" fill="#fff" stroke="#333"/></svg></button>
    <button class="running" aria-label="Visual Studio Code"><svg viewBox="-12 -12 24 24"><path d="M-12-4l2-2L6 7v5z" fill="#1479c4"/><path d="M-12 4l2 2L6-7v-5z" fill="#1b8ddb"/><path d="M6-12l6 3V9l-6 3z" fill="#25a4f2"/></svg></button>
    <button aria-label="Postman"><svg viewBox="-12 -12 24 24"><circle r="12" fill="#ff6c37"/><path d="M-6 7L2-1" stroke="#fff" stroke-width="1.500"/><path d="M-2 2L4-4" stroke="#ffe3d8" stroke-width="3"/><circle cx="5" cy="-6" r="2.500" fill="#fff"/></svg></button>
    <button aria-label="Document"><svg viewBox="-12 -12 24 24"><path d="M-8-11H4l5 5v17H-8z" fill="#f7f7f7"/><path d="M4-11v5h5" fill="none" stroke="#777"/></svg></button>
    <button aria-label="Power BI"><svg viewBox="-12 -12 24 24"><path d="M1-12h8v24H1z" fill="#d69510"/><path d="M-4-6h8v18h-8z" fill="#f0bc2a"/><path d="M-9 0h8v12h-8z" fill="#f7da62"/></svg></button>
    <button aria-label="Terminal"><svg viewBox="-12 -12 24 24"><rect x="-12" y="-9" width="24" height="18" rx="1.500" fill="#3c3c3c"/><path d="M-12-9h8v3h-8z" fill="#ccc"/><path d="M-4-9H12v3H-4z" fill="#808080"/><path d="M-9-3l4 4-4 4" fill="none" stroke="#ccc" stroke-width="2.500"/><path d="M-1 5.500h7" stroke="#fff" stroke-width="2"/></svg></button>
    <button aria-label="XAMPP"><svg viewBox="-12 -12 24 24"><rect x="-12" y="-12" width="24" height="24" rx="2" fill="#f5782a"/><path d="M-9-10H9" stroke="#ffb07a" stroke-width="1.500"/><use href="#p-x" transform="scale(1.700)"/></svg></button>
    <button aria-label="PostgreSQL"><svg viewBox="-12 -12 24 24"><path d="M-8-10Q-3-13 0-10 6-13 10-9q2 5-2 11l4 1-4 2-4-2q-1 9-4 9t-3-7q-4 6-6 0-3-8-2-12z" fill="#336791" stroke="#c8d8e6" stroke-width="1.300"/><path d="M0-10q-4 5-2 12M4-9q3 6 0 12" fill="none" stroke="#c8d8e6"/></svg></button>
    <button aria-label="Remote shell"><svg viewBox="-12 -12 24 24"><rect x="-11" y="-11" width="20" height="18" rx="3" fill="#24618c" stroke="#a9c1d1" stroke-width="1.500"/><path d="M-8-7l4 3-4 3M-3-1h4" fill="none" stroke="#fff" stroke-width="1.500"/><circle cx="5.500" cy="5" r="5.800" fill="#151515" stroke="#32a848" stroke-width="1.300"/></svg></button>
    <button aria-label="IntelliJ IDEA"><svg viewBox="-12 -12 24 24"><path d="M-5-12h17V4L4 12h-16V-4z" fill="url(#gr-ij)"/><path d="M-8-8H8V8H-8z"/><path d="M-6-5h4M-4-5v5M-6 0h4M0-5h3v4q0 1-2.500 1M-6 5.500H0" fill="none" stroke="#fff" stroke-width="1.400"/></svg></button>
    <button aria-label="Telegram"><svg viewBox="-12 -12 24 24"><circle r="11" fill="#229fdc"/><path d="M-7 0L6-5 4 6-1 3-3 5V1z" fill="#fff"/></svg></button>
  </div>
  <div class="current">
    <button class="app-current" aria-label="Brave window"><svg width="24" height="28" viewBox="-14 -16 28 32"><use href="#p-brave"/><path d="M-2-2L7-12q6-1 6 5L4 3z" fill="#35b57c"/><path d="M0 0L10-11M4 2L13-7" stroke="#fff" stroke-width="1.800"/></svg></button>
    <button class="more" aria-label="More"><svg width="20" height="6" viewBox="0 0 20 6" fill="#fff"><circle cx="2.500" cy="3" r="2"/><circle cx="10" cy="3" r="2"/><circle cx="17.500" cy="3" r="2"/></svg></button>
  </div>
  <div class="tray">
    <button class="wide" aria-label="Hidden icons"><svg viewBox="-12 -12 24 24"><path d="M-7.500 4L0-4l7.500 8" fill="none" stroke="#fff" stroke-width="2"/></svg></button>
    <button class="wide" aria-label="Update"><svg viewBox="-12 -12 24 24"><path d="M-11.500 1A11.500 11.500 0 0 1 11-5M11.200-11.500v7H4M-10.500 11.500V5h7M-10 5Q-6 11.200 0 11.200" fill="none" stroke="#f0f0f0" stroke-width="1.300"/><circle cx="6" cy="6" r="6" fill="#ff9800"/></svg></button>
    <button class="wide" aria-label="OneDrive"><svg viewBox="-12 -12 24 24"><path d="M-6 8a5.500 5.500 0 0 1-1-11A7.500 7.500 0 0 1 6-3a5.500 5.500 0 0 1 1 11z" fill="#777"/><path d="M-11-10L10 10" stroke="#1c1c1c" stroke-width="4"/><path d="M-11-10L10 10" stroke="#ddd" stroke-width="1.500"/></svg></button>
    <div class="status">
      <button aria-label="Wi-Fi"><svg viewBox="-12 -12 24 24"><path d="M-11.500-3Q0-14 11.500-3M-8 1Q0-7 8 1M-5 4Q0-1 5 4" fill="none" stroke="#fff" stroke-width="1.900"/><circle cy="6.500" r="2" fill="#fff"/></svg></button>
      <button aria-label="Volume"><svg viewBox="-12 -12 24 24"><path d="M-11-4h4l6-4.500v17L-7 4h-4zM2-4q3 4 0 8M5-7q6 7 0 14M8-9.500q8 9.500 0 19" fill="none" stroke="#fff" stroke-width="1.700"/></svg></button>
      <button aria-label="Battery"><svg viewBox="-12 -12 24 24"><path d="M0-7H7q2 0 2 2V5q0 2-2 2H-8" fill="none" stroke="#fff" stroke-width="2"/><path d="M9-2h3v4H9z" fill="#fff"/><path d="M-5-12q5 6 3 11-2 4-5 4l-3 4-1-1 2-4Q-14-5-5-12z" fill="#fff"/></svg></button>
    </div>
    <time class="clock">8:56 PM<br>10/29/2025</time>
  </div>
</footer>
</body>
</html>
```
FILE: styles.css
```css
* { box-sizing: border-box; }
body {
  margin: 0;
  min-height: 100vh;
  display: flex;
  flex-direction: column;
  background: #fff;
  color: #000;
  font-family: Inter, "Liberation Sans", sans-serif;
}
h1, h2, p, ul { margin: 0; padding: 0; }
button {
  margin: 0;
  padding: 0;
  border: 0;
  background: none;
  color: inherit;
  font: inherit;
  display: flex;
  align-items: center;
  justify-content: center;
}
svg { display: block; flex: none; }
svg text { font-family: "Liberation Sans", sans-serif; }
.sprite { position: absolute; width: 0; height: 0; }

/* browser window */
.browser { background: #201f24; }
.tabstrip { display: flex; align-items: center; height: 60px; }
.pinned { display: flex; width: 289px; padding-left: 1px; }
.tabs { display: flex; flex: 1; margin-right: 3px; }
.tab {
  flex: 1;
  height: 24px;
  border-right: 1px solid #3e3d43;
}
.tab svg { width: 18px; height: 24px; }
.tab-last { border-color: transparent; }
.tab-active {
  width: 48px;
  height: 48px;
  border-radius: 12px;
  background: #3b3a3f;
}
.tab-after { flex: none; width: 27px; }
.new-tab { width: 56px; height: 48px; }
.window-controls { display: flex; margin-left: 53px; padding-right: 1px; }
.window-controls button { width: 69px; height: 48px; }

.toolbar {
  display: flex;
  align-items: center;
  height: 62px;
  padding-right: 11px;
  border-bottom: 2px solid #323136;
  border-radius: 12px 12px 0 0;
  background: #3b3a3f;
}
.nav-buttons { display: flex; padding-left: 10px; }
.nav-buttons button { width: 45px; height: 45px; }
.bookmark { width: 50px; height: 45px; margin: 0 9px 0 165px; }
.address {
  flex: 1;
  display: flex;
  align-items: center;
  height: 48px;
  padding: 0 6px 0 14px;
  border-radius: 12px;
  background: #242328;
}
.url {
  flex: 1;
  min-width: 0;
  height: 40px;
  margin-left: 23px;
  padding: 0;
  border: 0;
  color: transparent;
  background: linear-gradient(90deg, #ececf0 86px, #bdbdc3 86px);
  -webkit-background-clip: text;
  background-clip: text;
  font: 20px "Open Sans", "Noto Sans", sans-serif;
}
.address-actions { display: flex; border-right: 2px solid #69686d; }
.address-actions button { width: 51px; height: 24px; }
.address-brand { display: flex; padding-left: 3px; }
.address-brand button { width: 50px; height: 28px; }
.extensions { display: flex; align-items: center; margin-left: 111px; }
.extensions button { width: 45px; height: 45px; }
.ext-sep { width: 4px; height: 24px; margin: 0 12px; border-radius: 2px; background: #242328; }

/* admin application */
.app { position: relative; flex: 1; display: flex; }
.sidebar {
  position: relative;
  z-index: 1;
  display: flex;
  flex-direction: column;
  width: 307px;
  background: #fff;
  box-shadow: 0 12px 18px -4px rgba(0, 0, 0, .1), 0 5px 7px -4px rgba(0, 0, 0, .1);
}
.brand {
  height: 96px;
  border-bottom: 1px solid #e5e7eb;
  font-size: 36px;
  line-height: 94px;
  font-weight: 700;
  text-align: center;
}
.menu { flex: 1; }
.menu a {
  display: flex;
  align-items: center;
  gap: 14px;
  height: 72px;
  padding: 0 0 2px 29px;
  color: #4b5563;
  font-size: 22px;
  font-weight: 500;
  text-decoration: none;
}
.menu svg, .logout svg, .theme svg {
  width: 29px;
  height: 29px;
  fill: none;
  stroke: currentColor;
  stroke-width: 2;
  stroke-linecap: round;
  stroke-linejoin: round;
}
.sidebar-foot { padding: 20px 19px; border-top: 1px solid #e5e7eb; }
.logout {
  width: 100%;
  height: 60px;
  justify-content: flex-start;
  gap: 14px;
  padding-left: 19px;
  color: #ef4444;
  font-size: 22px;
  font-weight: 500;
}
.content { flex: 1; display: flex; flex-direction: column; min-width: 0; }
.topbar {
  display: flex;
  justify-content: flex-end;
  align-items: center;
  height: 96px;
  padding-right: 249px;
  background: #fff;
  box-shadow: 0 5px 7px -1px rgba(0, 0, 0, .1), 0 2px 5px -2px rgba(0, 0, 0, .1);
}
.page { padding: 48px 58px; }
.page-head {
  display: flex;
  justify-content: space-between;
  align-items: center;
  height: 67px;
  margin-bottom: 29px;
}
h1 { font-size: 43px; line-height: 48px; font-weight: 700; }
.total {
  display: flex;
  align-items: center;
  gap: 10px;
  padding-right: 19px;
  font-size: 19px;
  font-weight: 600;
}
.total svg { width: 24px; height: 24px; }
.card {
  overflow: hidden;
  border-radius: 19px;
  background: #fff;
  box-shadow: 0 24px 30px -6px rgba(0, 0, 0, .1), 0 10px 12px -7px rgba(0, 0, 0, .1);
}
table { width: 100%; border-collapse: collapse; table-layout: fixed; }
.c-user { width: 23.2%; }
.c-date { width: 31.6%; }
.c-metrics { width: 22.4%; }
th, td { padding: 0 29px; text-align: left; }
th {
  height: 48px;
  background: #f9fafb;
  font-size: 14px;
  font-weight: 500;
  letter-spacing: 1px;
}
td { height: 121px; border-top: 1px solid #e5e7eb; font-size: 17px; }
.name { font-size: 19px; line-height: 29px; font-weight: 500; }
.mail { line-height: 24px; }
.date { display: flex; align-items: center; gap: 7px; }
.date svg { width: 19px; height: 19px; }
.metrics { list-style: none; }
.metrics li { display: flex; align-items: center; gap: 10px; height: 29px; }
.metrics svg { width: 19px; height: 19px; }
.sleep { color: #3b82f6; }
.heart { color: #ef4444; }
.temp { color: #f97316; }
.badge {
  display: inline-block;
  padding: 0 19px;
  border-radius: 18px;
  font-size: 17px;
  line-height: 35px;
  font-weight: 600;
}
.good { background: #d1fae5; color: #047857; }
.normal { background: #fef3c7; color: #b45309; }

.toast {
  position: absolute;
  z-index: 2;
  top: 19px;
  right: 19px;
  display: flex;
  align-items: center;
  gap: 12px;
  height: 54px;
  padding: 0 24px 0 12px;
  border-radius: 10px;
  background: #1e1e3f;
  color: #d6d6ff;
  font-size: 19px;
  font-weight: 500;
  box-shadow: 0 4px 12px rgba(0, 0, 0, .12);
}

/* taskbar */
.taskbar {
  display: flex;
  align-items: stretch;
  height: 72px;
  border-top: 2px solid #414141;
  background: #1c1c1c;
  color: #fff;
}
.widget { position: relative; width: 97px; padding-top: 8px; }
.count {
  position: absolute;
  top: 8px;
  left: 46px;
  width: 24px;
  height: 24px;
  border-radius: 12px;
  background: #ff99a4;
  color: #000;
  font: 16px/24px "Open Sans", sans-serif;
  text-align: center;
}
.apps { display: flex; margin-left: 121px; padding-bottom: 2px; }
.apps button { width: 48px; }
.apps svg, .tray svg { width: 24px; height: 24px; }
.running { position: relative; }
.running::after {
  content: "";
  position: absolute;
  bottom: 5px;
  left: 21px;
  width: 6px;
  height: 5px;
  border-radius: 3px;
  background: #999;
}
.current {
  display: flex;
  align-items: center;
  margin-left: 4px;
  padding-left: 5px;
  border: solid #9c9c9c;
  border-width: 0 2px;
}
.app-current {
  position: relative;
  width: 42px;
  height: 60px;
  border: 1px solid #353535;
  border-radius: 6px;
  background: #2a2a2a;
}
.app-current::before {
  content: "";
  position: absolute;
  top: 11px;
  right: 5px;
  width: 6px;
  height: 6px;
  border-radius: 3px;
  background: #a5a49e;
}
.app-current::after {
  content: "";
  position: absolute;
  bottom: 0;
  left: 12px;
  width: 16px;
  height: 5px;
  border-radius: 3px;
  background: #a5a49e;
}
.more { width: 54px; height: 60px; }
.tray {
  display: flex;
  align-items: center;
  margin-left: auto;
  padding: 0 29px 2px 0;
}
.tray button { width: 36px; height: 60px; }
.tray .wide { width: 48px; }
.status { display: flex; margin-left: 6px; }
.clock {
  width: 112px;
  font: 17px/24px "Open Sans", "Noto Sans", sans-serif;
  text-align: right;
}
```
